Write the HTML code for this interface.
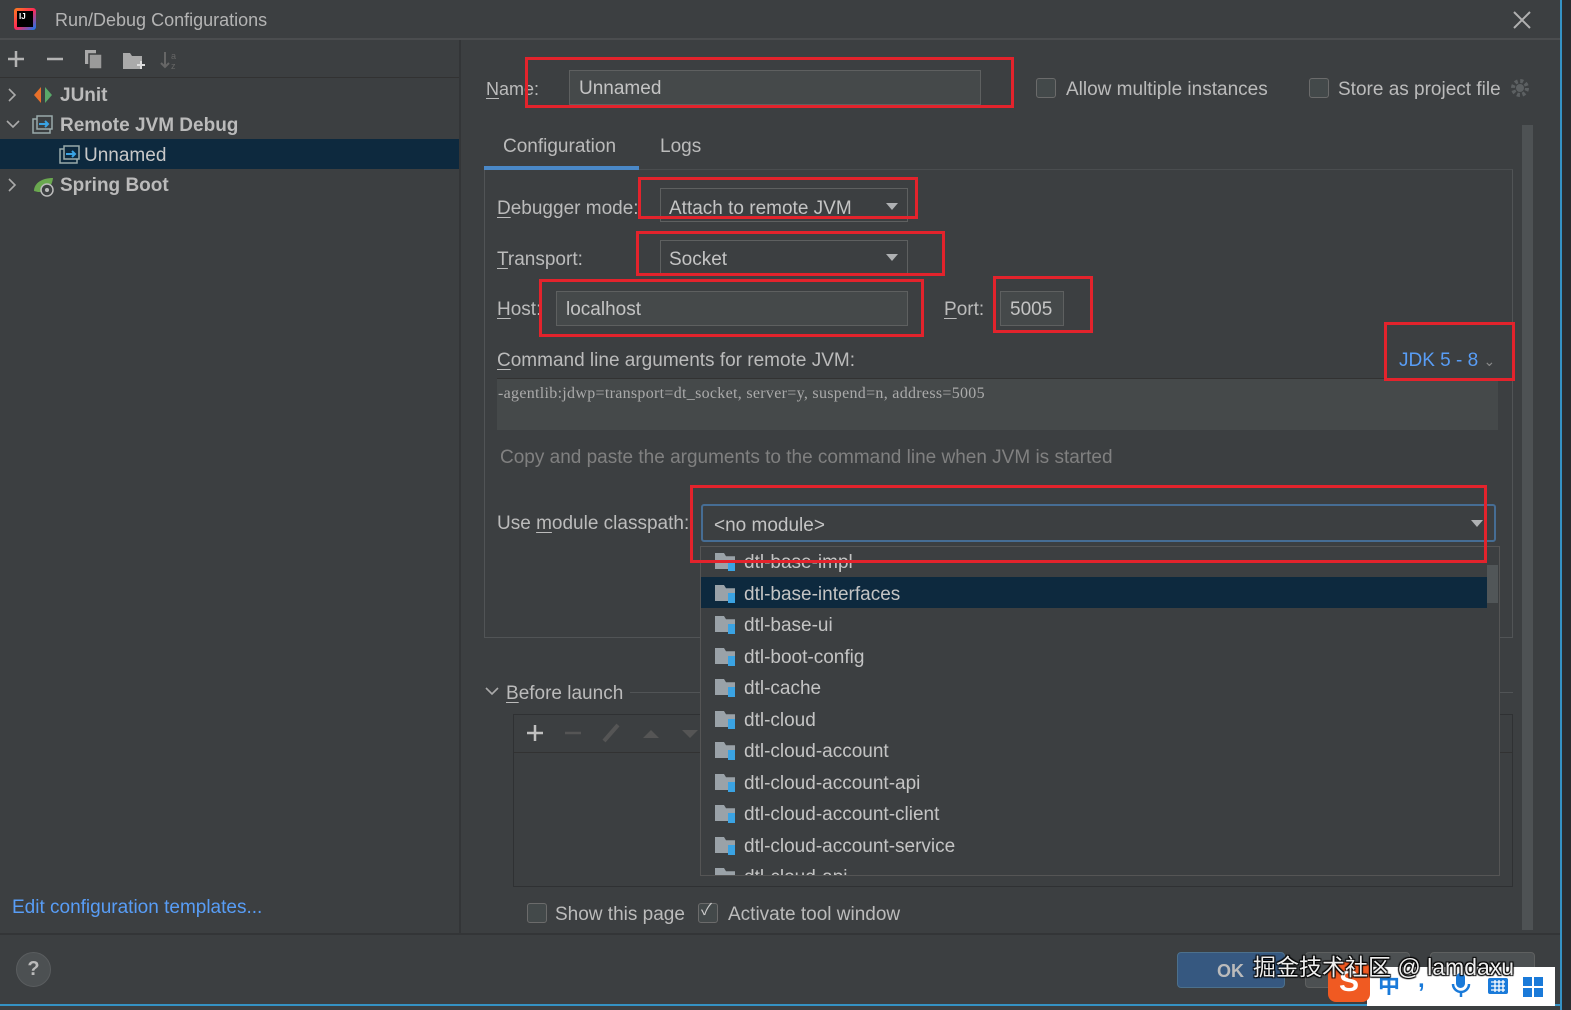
<!DOCTYPE html>
<html><head><meta charset="utf-8"><style>
*{margin:0;padding:0;box-sizing:border-box}
body{width:1571px;height:1010px;background:#3c3f41;position:relative;overflow:hidden;font-family:"Liberation Sans","Noto Sans CJK SC",sans-serif;color:#bbbbbb;font-size:18px}
.a{position:absolute;white-space:nowrap}
.t{line-height:1}
.inp{position:absolute;background:#45494a;border:1px solid #5e6060}
.red{position:absolute;border:3px solid #e3232c}
.cb{position:absolute;width:20px;height:20px;border:1px solid #6b6b6b;border-radius:3px;background:#43494a}
.arr{position:absolute;width:0;height:0;border-left:6px solid transparent;border-right:6px solid transparent;border-top:7px solid #afb1b3}
.row{position:absolute;left:701px;width:798px;height:31px}
.fi{position:absolute;left:14px;top:7px;width:20px;height:16px;background:#9aa2a8;clip-path:polygon(0 0,45% 0,55% 20%,100% 20%,100% 100%,0 100%)}
.fb{position:absolute;left:27px;top:15px;width:7px;height:10px;background:#3aa3e3}
.rt{position:absolute;left:43px;top:6px;font-size:19px;color:#c4c4c4}
.u{text-decoration:underline;text-underline-offset:3px}
</style></head><body>
<div class="a" style="left:0;top:0;width:1560px;height:40px;border-bottom:2px solid #4b4d4f"></div>
<div class="a" style="left:14px;top:8px;width:22px;height:22px;background:linear-gradient(135deg,#fc801d,#fe2857 50%,#087cfa);border-radius:3px"></div>
<div class="a" style="left:17px;top:11px;width:16px;height:16px;background:#000;color:#fff;font-size:8px;font-weight:bold;padding:1px 2px">IJ</div>
<div class="a t" style="left:55px;top:11px;font-size:18px;color:#b4b4b4">Run/Debug Configurations</div>
<svg class="a" style="left:1513px;top:11px" width="18" height="18"><path d="M1 1L17 17M17 1L1 17" stroke="#b0b0b0" stroke-width="2"/></svg>
<div class="a" style="left:459px;top:40px;width:2px;height:893px;background:#333537"></div>
<div class="a" style="left:0;top:77px;width:459px;height:1px;background:#323232"></div>
<svg class="a" style="left:5px;top:48px" width="180" height="24">
<path d="M3 11H19M11 3V19" stroke="#b4b4b4" stroke-width="2.5"/>
<path d="M42 11H58" stroke="#b4b4b4" stroke-width="2.5"/>
<rect x="80" y="2" width="11" height="14" fill="#aaa"/><rect x="84" y="6" width="13" height="15" fill="#9a9a9a" stroke="#3c3f41" stroke-width="1.5"/>
<path d="M118 5h7l2 3h10v13h-19z" fill="#aaa"/><path d="M132 17h8M136 13v8" stroke="#ddd" stroke-width="2"/>
<path d="M160 4v15M156 15l4 4 4-4" stroke="#666" stroke-width="2" fill="none"/><text x="166" y="11" font-size="9" fill="#666">a</text><text x="166" y="21" font-size="9" fill="#666">z</text>
</svg>
<div class="a" style="left:0;top:139px;width:459px;height:30px;background:#0d293e"></div>
<svg class="a" style="left:6px;top:86px" width="14" height="110"><path d="M3 3l6 6-6 6M1 35l6 6 6-6M3 93l6 6-6 6" stroke="#aaa" stroke-width="1.6" fill="none"/></svg>
<svg class="a" style="left:33px;top:86px" width="22" height="18"><path d="M8 1L1 9l7 8z" fill="#e8702a"/><path d="M12 1l7 8-7 8z" fill="#59a869"/></svg>
<svg class="a" style="left:32px;top:115px" width="22" height="20"><rect x="1" y="4" width="17" height="14" fill="none" stroke="#9aa" stroke-width="1.5"/><rect x="5" y="1" width="15" height="13" fill="#3c3f41" stroke="#9aa" stroke-width="1.5"/><path d="M7 9h9M13 6l3 3-3 3" stroke="#3aa3e3" stroke-width="2" fill="none"/></svg>
<svg class="a" style="left:59px;top:145px" width="22" height="20"><rect x="1" y="4" width="17" height="14" fill="none" stroke="#9aa" stroke-width="1.5"/><rect x="5" y="1" width="15" height="13" fill="#0d293e" stroke="#9aa" stroke-width="1.5"/><path d="M7 9h9M13 6l3 3-3 3" stroke="#3aa3e3" stroke-width="2" fill="none"/></svg>
<svg class="a" style="left:32px;top:175px" width="24" height="22"><path d="M2 16C2 8 10 3 21 3 20 12 14 17 6 17z" fill="#6aa84f"/><circle cx="15" cy="15" r="6" fill="#3c3f41" stroke="#bbb" stroke-width="1.5"/><circle cx="15" cy="15" r="2" fill="#bbb"/></svg>
<div class="a t" style="left:60px;top:86px;font-weight:bold;font-size:19px">JUnit</div>
<div class="a t" style="left:60px;top:116px;font-weight:bold;font-size:19px">Remote JVM Debug</div>
<div class="a t" style="left:84px;top:146px;font-size:19px;color:#c8c8c8">Unnamed</div>
<div class="a t" style="left:60px;top:176px;font-weight:bold;font-size:19px">Spring Boot</div>
<div class="a t" style="left:12px;top:898px;color:#589df6;font-size:19px">Edit configuration templates...</div>
<div class="a" style="left:0;top:933px;width:1560px;height:2px;background:#333537"></div>
<div class="a" style="left:16px;top:952px;width:35px;height:35px;border-radius:50%;background:#4c5052;border:1px solid #5a5d5f;color:#bbb;font-size:20px;font-weight:bold;text-align:center;line-height:33px">?</div>
<div class="a" style="left:0;top:1004px;width:1560px;height:2px;background:#3592c4"></div>
<div class="a" style="left:1560px;top:0;width:11px;height:1010px;background:#2b2d30;border-left:2px solid #3592c4"></div>
<div class="a t" style="left:486px;top:80px"><span class="u">N</span>ame:</div>
<div class="inp" style="left:569px;top:70px;width:412px;height:35px"></div>
<div class="a t" style="left:579px;top:79px;color:#c4c4c4;font-size:19px">Unnamed</div>
<div class="cb" style="left:1036px;top:78px"></div>
<div class="a t" style="left:1066px;top:80px;font-size:19px">Allow multiple instances</div>
<div class="cb" style="left:1309px;top:78px"></div>
<div class="a t" style="left:1338px;top:80px;font-size:19px">Store as project file</div>
<svg class="a" style="left:1510px;top:78px" width="22" height="22"><circle cx="10" cy="10" r="7" fill="none" stroke="#5c6062" stroke-width="4" stroke-dasharray="3 2.5"/><circle cx="10" cy="10" r="4" fill="#5c6062"/></svg>
<div class="a" style="left:1522px;top:125px;width:11px;height:805px;background:#4e5254"></div>
<div class="a t" style="left:503px;top:137px;font-size:19px">Configuration</div>
<div class="a t" style="left:660px;top:137px;font-size:19px">Logs</div>
<div class="a" style="left:484px;top:169px;width:1029px;height:469px;border:1px solid #515456;border-top:1px solid #4a4d4f"></div>
<div class="a" style="left:484px;top:166px;width:155px;height:4px;background:#4a88c7"></div>
<div class="a t" style="left:497px;top:199px;font-size:19px"><span class="u">D</span>ebugger mode:</div>
<div class="inp" style="left:660px;top:188px;width:248px;height:34px;border-color:#5e6060;background:#3c3f41"></div>
<div class="a t" style="left:669px;top:199px;font-size:19px;color:#c4c4c4">Attach to remote JVM</div>
<div class="arr" style="left:886px;top:203px"></div>
<div class="a t" style="left:497px;top:250px;font-size:19px"><span class="u">T</span>ransport:</div>
<div class="inp" style="left:660px;top:240px;width:248px;height:34px;background:#3c3f41"></div>
<div class="a t" style="left:669px;top:250px;font-size:19px;color:#c4c4c4">Socket</div>
<div class="arr" style="left:886px;top:254px"></div>
<div class="a t" style="left:497px;top:300px;font-size:19px"><span class="u">H</span>ost:</div>
<div class="inp" style="left:556px;top:291px;width:352px;height:35px"></div>
<div class="a t" style="left:566px;top:300px;font-size:19px;color:#c4c4c4">localhost</div>
<div class="a t" style="left:944px;top:300px;font-size:19px"><span class="u">P</span>ort:</div>
<div class="inp" style="left:1000px;top:291px;width:64px;height:35px"></div>
<div class="a t" style="left:1010px;top:300px;font-size:19px;color:#c4c4c4">5005</div>
<div class="a t" style="left:497px;top:351px;font-size:19px"><span class="u">C</span>ommand line arguments for remote JVM:</div>
<div class="a t" style="left:1399px;top:351px;font-size:19px;color:#589df6">JDK 5 - 8 <span style="color:#8a8a8a;font-size:14px">&#8964;</span></div>
<div class="a" style="left:497px;top:378px;width:1001px;height:52px;background:#45494a;border-top:1px solid #323232"></div>
<div class="a t" style="left:498px;top:386px;font-family:'Liberation Serif',serif;font-size:16px;letter-spacing:0.3px;color:#aaa">-agentlib:jdwp=transport=dt_socket, server=y, suspend=n, address=5005</div>
<div class="a t" style="left:500px;top:448px;font-size:19px;color:#808080">Copy and paste the arguments to the command line when JVM is started</div>
<div class="a t" style="left:497px;top:514px;font-size:19px">Use <span class="u">m</span>odule classpath:</div>
<div class="a" style="left:701px;top:504px;width:795px;height:38px;border:2px solid #466d94;border-radius:3px;background:#3c3f41"></div>
<div class="a t" style="left:714px;top:516px;font-size:19px;color:#c4c4c4">&lt;no module&gt;</div>
<div class="arr" style="left:1471px;top:520px"></div>
<svg class="a" style="left:485px;top:686px" width="14" height="10"><path d="M1 2l6 6 6-6" stroke="#aaa" stroke-width="1.6" fill="none"/></svg>
<div class="a t" style="left:506px;top:684px;font-size:19px"><span class="u">B</span>efore launch</div>
<div class="a" style="left:630px;top:692px;width:883px;height:1px;background:#515456"></div>
<div class="a" style="left:513px;top:714px;width:1000px;height:173px;border:1px solid #2f3133;background:#3c3f41"></div>
<div class="a" style="left:514px;top:752px;width:998px;height:1px;background:#323232"></div>
<svg class="a" style="left:524px;top:722px" width="180" height="22"><path d="M3 11H19M11 3V19" stroke="#c0c0c0" stroke-width="2.5"/><path d="M41 11H57" stroke="#555" stroke-width="2.5"/><path d="M80 19L94 3" stroke="#555" stroke-width="4"/><path d="M119 16l8-8 8 8z" fill="#555"/><path d="M158 8l8 8 8-8z" fill="#555"/></svg>
<div class="cb" style="left:527px;top:903px"></div>
<div class="a t" style="left:555px;top:905px;font-size:19px">Show this page</div>
<div class="cb" style="left:698px;top:903px"></div>
<div class="a t" style="left:701px;top:903px;font-size:16px;color:#ccc">✓</div>
<div class="a t" style="left:728px;top:905px;font-size:19px">Activate tool window</div>
<div class="a" style="left:700px;top:546px;width:800px;height:330px;background:#3c3f41;border:1px solid #555;overflow:hidden"></div>
<div class="a" style="left:1487px;top:565px;width:11px;height:38px;background:#515658"></div>
<div class="row" style="top:577px;height:31px;background:#0d293e;width:786px"></div>
<div class="row" style="top:546px"><div class="fi"></div><div class="fb"></div><div class="rt">dtl-base-impl</div></div>
<div class="row" style="top:578px;width:786px"><div class="fi"></div><div class="fb"></div><div class="rt">dtl-base-interfaces</div></div>
<div class="row" style="top:609px"><div class="fi"></div><div class="fb"></div><div class="rt">dtl-base-ui</div></div>
<div class="row" style="top:641px"><div class="fi"></div><div class="fb"></div><div class="rt">dtl-boot-config</div></div>
<div class="row" style="top:672px"><div class="fi"></div><div class="fb"></div><div class="rt">dtl-cache</div></div>
<div class="row" style="top:704px"><div class="fi"></div><div class="fb"></div><div class="rt">dtl-cloud</div></div>
<div class="row" style="top:735px"><div class="fi"></div><div class="fb"></div><div class="rt">dtl-cloud-account</div></div>
<div class="row" style="top:767px"><div class="fi"></div><div class="fb"></div><div class="rt">dtl-cloud-account-api</div></div>
<div class="row" style="top:798px"><div class="fi"></div><div class="fb"></div><div class="rt">dtl-cloud-account-client</div></div>
<div class="row" style="top:830px"><div class="fi"></div><div class="fb"></div><div class="rt">dtl-cloud-account-service</div></div>
<div class="row" style="top:861px;height:14px;overflow:hidden"><div class="fi"></div><div class="rt">dtl-cloud-api</div></div>
<div class="red" style="left:525px;top:57px;width:489px;height:51px"></div>
<div class="red" style="left:638px;top:177px;width:280px;height:42px"></div>
<div class="red" style="left:636px;top:231px;width:309px;height:45px"></div>
<div class="red" style="left:539px;top:279px;width:385px;height:58px"></div>
<div class="red" style="left:993px;top:276px;width:100px;height:57px"></div>
<div class="red" style="left:1384px;top:322px;width:131px;height:59px"></div>
<div class="red" style="left:690px;top:485px;width:797px;height:78px"></div>
<div class="a" style="left:1177px;top:952px;width:108px;height:36px;background:#365880;border:1px solid #4c708c;border-radius:4px"></div>
<div class="a t" style="left:1217px;top:962px;font-weight:bold;color:#bbb">OK</div>
<div class="a" style="left:1305px;top:952px;width:105px;height:36px;background:#4c5052;border:1px solid #5e6060;border-radius:4px"></div>
<div class="a" style="left:1430px;top:952px;width:105px;height:36px;background:#4c5052;border:1px solid #5e6060;border-radius:4px"></div>
<div class="a" style="left:1367px;top:967px;width:188px;height:39px;background:#fff"></div>
<div class="a" style="left:1328px;top:962px;width:42px;height:40px;background:#f05a22;border-radius:8px;color:#fff;font-weight:bold;font-size:30px;text-align:center;line-height:40px">S</div>
<div class="a t" style="left:1378px;top:975px;color:#1a7ad9;font-size:22px;font-weight:bold">中</div>
<div class="a t" style="left:1418px;top:968px;color:#1a7ad9;font-size:24px;font-weight:bold">,</div>
<svg class="a" style="left:1450px;top:972px" width="22" height="28"><rect x="6" y="1" width="9" height="15" rx="4.5" fill="#1a7ad9"/><path d="M3 12a8 8 0 0 0 16 0M11 20v5" stroke="#1a7ad9" stroke-width="2.5" fill="none"/></svg>
<svg class="a" style="left:1487px;top:977px" width="22" height="18"><rect x="1" y="1" width="20" height="16" rx="2" fill="#1a7ad9"/><path d="M4 5h14M4 9h14M4 13h14M8 3v12M12 3v12M16 3v12" stroke="#fff" stroke-width="1.3"/></svg>
<svg class="a" style="left:1523px;top:977px" width="20" height="20"><rect x="0" y="0" width="9" height="9" fill="#1a7ad9"/><rect x="11" y="0" width="9" height="9" fill="#1a7ad9"/><rect x="0" y="11" width="9" height="9" fill="#1a7ad9"/><rect x="11" y="11" width="9" height="9" fill="#1a7ad9"/></svg>
<div class="a t" style="left:1253px;top:956px;font-size:23px;color:#eee;text-shadow:1px 1px 1px #000,-1px -1px 1px #000,1px -1px 1px #000,-1px 1px 1px #000">掘金技术社区 @ lamdaxu</div>
</body></html>
